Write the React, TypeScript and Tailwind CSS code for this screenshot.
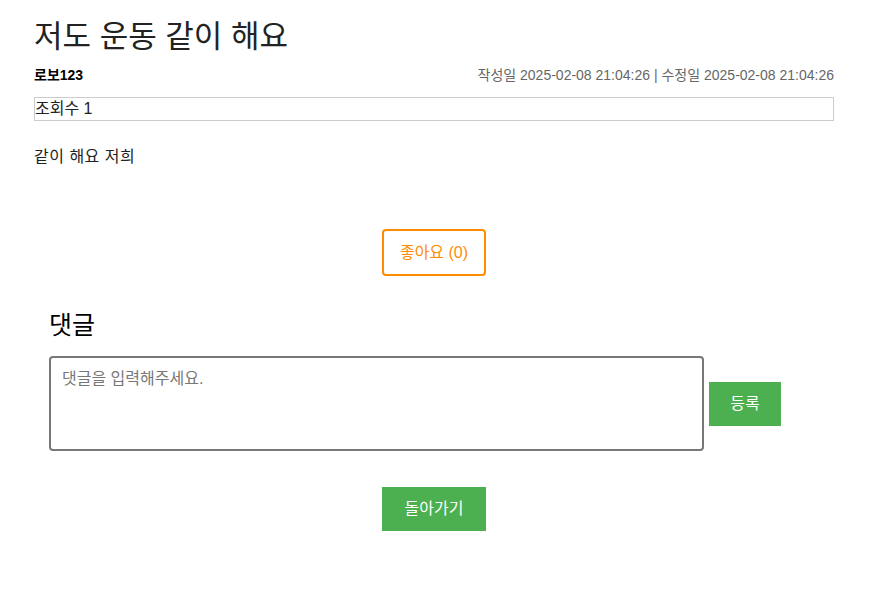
import React, { useState } from 'react';

const FONT = { fontFamily: '"Liberation Sans", "Noto Sans CJK KR", sans-serif' };

export default function App() {
  const [likes, setLikes] = useState(0);
  const [comment, setComment] = useState('');

  return (
    <div className="min-h-screen bg-white text-[#333]" style={FONT}>
      <div className="ml-[34px] w-[800px] pt-[17px]">
        {/* Post header */}
        <h1 className="text-[31px] leading-[40px] font-normal text-[#222]">저도 운동 같이 해요</h1>
        <div className="mt-[10px] flex items-center justify-between h-[16px]">
          <span className="text-[14px] font-bold text-black">로보123</span>
          <span className="text-[14px] text-[#666]">
            작성일 2025-02-08 21:04:26 | 수정일 2025-02-08 21:04:26
          </span>
        </div>
        <div className="mt-[14px] h-[24px] border border-[#ccc] flex items-center text-[16px] text-[#222]">
          조회수 1
        </div>

        {/* Content */}
        <p className="mt-[25px] text-[16px] leading-[22px] text-[#222] tracking-[0.5px]">같이 해요 저희</p>

        {/* Like */}
        <div className="mt-[61px] flex justify-center">
          <button
            type="button"
            onClick={() => setLikes(likes + 1)}
            className="w-[104px] h-[47px] border-2 border-[#ff8c00] rounded-[4px] text-[16px] text-[#ff8c00] bg-white"
          >
            좋아요 ({likes})
          </button>
        </div>

        {/* Comments */}
        <div className="px-[15px] mt-[31px]">
          <h3 className="text-[25px] leading-[36px] font-normal text-black">댓글</h3>
          <div className="mt-[13px] flex items-center gap-[5px]">
            <textarea
              value={comment}
              onChange={(e) => setComment(e.target.value)}
              placeholder="댓글을 입력해주세요."
              className="w-[655px] h-[95px] border-2 border-[#777] rounded-[4px] px-[11px] py-[10px] text-[16px] leading-[22px] placeholder-[#777] resize-none outline-none"
            />
            <button type="button" className="w-[72px] h-[44px] bg-[#4caf50] text-white text-[16px]">
              등록
            </button>
          </div>
        </div>

        {/* Back */}
        <div className="mt-[36px] flex justify-center">
          <button type="button" className="w-[104px] h-[44px] bg-[#4caf50] text-white text-[16px]">
            돌아가기
          </button>
        </div>
      </div>
    </div>
  );
}
